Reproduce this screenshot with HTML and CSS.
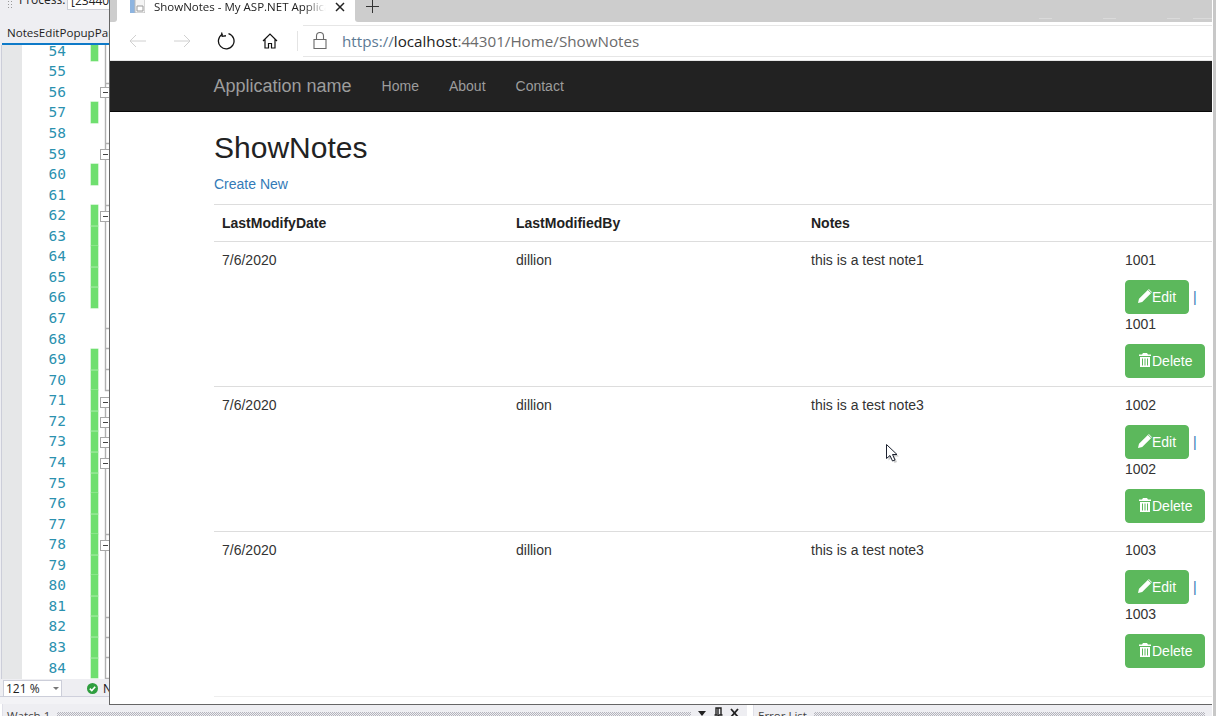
FILE: index.html
```html
<!DOCTYPE html>
<html lang="en">
<head>
<meta charset="utf-8">
<title>ShowNotes - My ASP.NET Application</title>
<link rel="stylesheet" href="styles.css">
</head>
<body>
<div class="ide">
  <div class="ide-toolbar">
    <span class="grip"></span>
    <span class="process-label">Process:</span>
    <span class="process-box">[23440]</span>
  </div>
  <div class="ide-tabs"><span class="ide-tab">NotesEditPopupPartial</span></div>
  <div class="editor">
    <div class="lines">
      <div class="line"><span class="num">54</span><span class="mark on"></span></div>
      <div class="line"><span class="num">55</span><span class="mark"></span></div>
      <div class="line"><span class="num">56</span><span class="mark"></span></div>
      <div class="line"><span class="num">57</span><span class="mark on"></span></div>
      <div class="line"><span class="num">58</span><span class="mark"></span></div>
      <div class="line"><span class="num">59</span><span class="mark"></span></div>
      <div class="line"><span class="num">60</span><span class="mark on"></span></div>
      <div class="line"><span class="num">61</span><span class="mark"></span></div>
      <div class="line"><span class="num">62</span><span class="mark on"></span></div>
      <div class="line"><span class="num">63</span><span class="mark on seam"></span></div>
      <div class="line"><span class="num">64</span><span class="mark on"></span></div>
      <div class="line"><span class="num">65</span><span class="mark on seam"></span></div>
      <div class="line"><span class="num">66</span><span class="mark on seam"></span></div>
      <div class="line"><span class="num">67</span><span class="mark"></span></div>
      <div class="line"><span class="num">68</span><span class="mark"></span></div>
      <div class="line"><span class="num">69</span><span class="mark on"></span></div>
      <div class="line"><span class="num">70</span><span class="mark on seam"></span></div>
      <div class="line"><span class="num">71</span><span class="mark on"></span></div>
      <div class="line"><span class="num">72</span><span class="mark on seam"></span></div>
      <div class="line"><span class="num">73</span><span class="mark on seam"></span></div>
      <div class="line"><span class="num">74</span><span class="mark on seam"></span></div>
      <div class="line"><span class="num">75</span><span class="mark on seam"></span></div>
      <div class="line"><span class="num">76</span><span class="mark on"></span></div>
      <div class="line"><span class="num">77</span><span class="mark on seam"></span></div>
      <div class="line"><span class="num">78</span><span class="mark on"></span></div>
      <div class="line"><span class="num">79</span><span class="mark on seam"></span></div>
      <div class="line"><span class="num">80</span><span class="mark on"></span></div>
      <div class="line"><span class="num">81</span><span class="mark on seam"></span></div>
      <div class="line"><span class="num">82</span><span class="mark on seam"></span></div>
      <div class="line"><span class="num">83</span><span class="mark on seam"></span></div>
      <div class="line"><span class="num">84</span><span class="mark on seam"></span></div>
    </div>
    <svg class="folds" width="12" height="634" viewBox="98 45 12 634" aria-hidden="true">
      <g fill="none" stroke="#b0b0b0" stroke-width="1.4">
        <path d="M105.5 44V87M105.5 83.5H110"/>
        <path d="M105.5 98V149M105.5 143.5H110"/>
        <path d="M105.5 160V211M105.5 205.5H110"/>
        <path d="M105.5 222V390.5H110M105.500 328.5H110M105.5 348.5H110M105.5 369.5H110"/>
        <path d="M105.5 408V417M105.5 428V437M105.5 448V458"/>
        <path d="M105.5 469V540M105.5 534.5H110"/>
        <path d="M105.5 551V678.5H110M105.5 617.5H110M105.5 637.5H110M105.5 657.5H110"/>
      </g>
      <g class="fold-box">
        <rect x="100.5" y="87.5" width="10" height="10"/><path d="M103 92.5h5"/>
        <rect x="100.5" y="149.5" width="10" height="10"/><path d="M103 154.5h5"/>
        <rect x="100.5" y="211.5" width="10" height="10"/><path d="M103 216.5h5"/>
        <rect x="100.5" y="397.5" width="10" height="10"/><path d="M103 402.5h5"/>
        <rect x="100.5" y="417.5" width="10" height="10"/><path d="M103 422.5h5"/>
        <rect x="100.5" y="437.5" width="10" height="10"/><path d="M103 442.5h5"/>
        <rect x="100.5" y="458.5" width="10" height="10"/><path d="M103 463.5h5"/>
        <rect x="100.5" y="540.5" width="10" height="10"/><path d="M103 545.5h5"/>
      </g>
    </svg>
  </div>
  <div class="status">
    <span class="zoom-box">121 %<span class="zoom-caret"></span></span>
    <svg class="ok-icon" width="11" height="11" viewBox="0 0 11 11" aria-hidden="true"><circle cx="5.5" cy="5.5" r="5.5" fill="#2f9e3f"/><path d="M2.8 5.6l2 2 3.4-3.8" fill="none" stroke="#fff" stroke-width="1.6"/></svg>
    <span class="status-text">No issues found</span>
  </div>
  <div class="panels">
    <div class="panel panel-watch">
      <span class="panel-title">Watch 1</span>
      <span class="panel-dots"></span>
      <svg class="panel-tools" width="46" height="12" viewBox="0 0 46 12" aria-hidden="true">
        <path d="M0 4h8l-4 5z" fill="#222"/>
        <path d="M18 1h5v7h-5zM20 1v6M16.500 8h8M20.500 8v4" fill="none" stroke="#222" stroke-width="1.400"/>
        <path d="M33 2l7 8M40 2l-7 8" fill="none" stroke="#222" stroke-width="1.800"/>
      </svg>
    </div>
    <div class="panel panel-errors">
      <span class="panel-title">Error List</span>
      <span class="panel-dots"></span>
    </div>
  </div>
</div>

<div class="browser">
  <div class="tabstrip">
    <span class="strip-left"></span>
    <div class="tab">
      <svg class="favicon" width="15" height="14" viewBox="0 0 15 14" aria-hidden="true">
        <path d="M0 0h5v14H0z" fill="#8db4e0"/>
        <path d="M5 0h10v14H5z" fill="#f4f4f4" stroke="#b8b8b8"/>
        <path d="M7 7h6v5H7z" fill="#fff" stroke="#9a9a9a"/>
      </svg>
      <span class="tab-title">ShowNotes - My ASP.NET Application</span>
      <svg class="tab-close" width="10" height="10" viewBox="0 0 10 10" aria-hidden="true"><path d="M1 1l8 8M9 1l-8 8" stroke="#222" stroke-width="1.500" fill="none"/></svg>
    </div>
    <div class="strip-rest">
      <svg class="new-tab" width="13" height="13" viewBox="0 0 13 13" aria-hidden="true"><path d="M6.500 0v13M0 6.500h13" stroke="#333" stroke-width="1" fill="none"/></svg>
    </div>
  </div>
  <div class="addressbar">
    <span class="nav-btn"><svg width="18" height="14" viewBox="0 0 18 14" aria-hidden="true"><path d="M17 7H1M7 1L1 7l6 6" fill="none" stroke="#d0d0d0" stroke-width="1"/></svg></span>
    <span class="nav-btn"><svg width="18" height="14" viewBox="0 0 18 14" aria-hidden="true"><path d="M1 7h16M11 1l6 6-6 6" fill="none" stroke="#d0d0d0" stroke-width="1"/></svg></span>
    <span class="nav-btn"><svg width="18" height="18" viewBox="0 0 18 18" aria-hidden="true"><path d="M5.500 2.200A7.800 7.800 0 1 0 11.500 1.600" fill="none" stroke="#111" stroke-width="1.300"/><path d="M5 0.500v3.800h3.800" fill="none" stroke="#111" stroke-width="1.300" transform="rotate(-8 5 3)"/></svg></span>
    <span class="nav-btn"><svg width="16" height="16" viewBox="0 0 16 16" aria-hidden="true"><path d="M1 8l7-7 7 7M3 6.500V15h3.500v-4.500h3V15H13V6.500" fill="none" stroke="#111" stroke-width="1.200"/></svg></span>
    <span class="nav-divider"></span>
    <div class="url-field">
      <svg class="lock" width="14" height="17" viewBox="0 0 14 17" aria-hidden="true"><path d="M1 7.500h12v9H1zM3.500 7.500V4a3.500 3.500 0 0 1 7 0v3.500" fill="none" stroke="#6a6a6a" stroke-width="1.100"/></svg>
      <span class="url"><span class="url-soft">https://</span><span class="url-host">localhost</span><span class="url-dim">:44301/Home/ShowNotes</span></span>
    </div>
  </div>

  <nav class="navbar">
    <a class="brand" href="#">Application name</a>
    <a class="nav-link" href="#">Home</a>
    <a class="nav-link" href="#">About</a>
    <a class="nav-link" href="#">Contact</a>
  </nav>

  <main class="page">
    <h2 class="title">ShowNotes</h2>
    <p class="create"><a href="#">Create New</a></p>
    <table class="notes">
      <thead>
        <tr>
          <th class="col-date">LastModifyDate</th>
          <th class="col-by">LastModifiedBy</th>
          <th class="col-notes">Notes</th>
          <th></th>
        </tr>
      </thead>
      <tbody>
        <tr>
          <td>7/6/2020</td><td>dillion</td><td>this is a test note1</td>
          <td>
            <div class="id">1001</div>
            <div class="action"><a class="btn" href="#"><svg class="glyph" viewBox="0 0 14 14" aria-hidden="true"><path d="M0 14l1-4.200L9.800 1l3.200 3.200L4.200 13zM10.800 0l3.200 3.200-.6.600L10.200.6z"/></svg>Edit</a> <a class="sep" href="#">|</a></div>
            <div class="id">1001</div>
            <div class="action"><a class="btn" href="#"><svg class="glyph" viewBox="0 0 14 14" aria-hidden="true"><path d="M5 0h4l1 1.500h3V3H1V1.500h3zM2 4h10v10H2zM4 5.500V12.500h1V5.500zM6.500 5.500V12.500h1V5.500zM9 5.500V12.500h1V5.500z" fill-rule="evenodd"/></svg>Delete</a></div>
          </td>
        </tr>
        <tr>
          <td>7/6/2020</td><td>dillion</td><td>this is a test note3</td>
          <td>
            <div class="id">1002</div>
            <div class="action"><a class="btn" href="#"><svg class="glyph" viewBox="0 0 14 14" aria-hidden="true"><path d="M0 14l1-4.200L9.800 1l3.200 3.200L4.200 13zM10.800 0l3.200 3.200-.6.600L10.200.6z"/></svg>Edit</a> <a class="sep" href="#">|</a></div>
            <div class="id">1002</div>
            <div class="action"><a class="btn" href="#"><svg class="glyph" viewBox="0 0 14 14" aria-hidden="true"><path d="M5 0h4l1 1.500h3V3H1V1.500h3zM2 4h10v10H2zM4 5.500V12.500h1V5.500zM6.500 5.500V12.500h1V5.500zM9 5.500V12.500h1V5.500z" fill-rule="evenodd"/></svg>Delete</a></div>
          </td>
        </tr>
        <tr>
          <td>7/6/2020</td><td>dillion</td><td>this is a test note3</td>
          <td>
            <div class="id">1003</div>
            <div class="action"><a class="btn" href="#"><svg class="glyph" viewBox="0 0 14 14" aria-hidden="true"><path d="M0 14l1-4.200L9.800 1l3.200 3.200L4.200 13zM10.800 0l3.200 3.200-.6.600L10.200.6z"/></svg>Edit</a> <a class="sep" href="#">|</a></div>
            <div class="id">1003</div>
            <div class="action"><a class="btn" href="#"><svg class="glyph" viewBox="0 0 14 14" aria-hidden="true"><path d="M5 0h4l1 1.500h3V3H1V1.500h3zM2 4h10v10H2zM4 5.500V12.500h1V5.500zM6.500 5.500V12.500h1V5.500zM9 5.500V12.500h1V5.500z" fill-rule="evenodd"/></svg>Delete</a></div>
          </td>
        </tr>
      </tbody>
    </table>
    <hr class="rule">
  </main>
  <svg class="cursor" width="16" height="21" viewBox="0 0 16 21" aria-hidden="true">
    <path d="M2.500 2.500v14l3.500-3 2.500 5.500 2.500-1-2.500-5.500h4.500z" fill="#8a8a8a" opacity=".45"/>
    <path d="M.5.500v14l3.500-3 2.500 5.500 2.500-1-2.500-5.500h4.500z" fill="#fff" stroke="#1c2230" stroke-width="1"/>
  </svg>
</div>
</body>
</html>
```
FILE: styles.css
```css
* { box-sizing: border-box; }
html, body { margin: 0; height: 100%; }
body {
  position: relative;
  width: 1216px;
  height: 716px;
  overflow: hidden;
  background: #c8c8c8;
  font-family: "Liberation Sans", Arial, sans-serif;
}

/* IDE behind the browser */
.ide {
  width: 1213px;
  height: 716px;
  display: flex;
  flex-direction: column;
  background: #eeeef2;
  border-right: 1px solid #fff;
  overflow: hidden;
}
.ide-toolbar {
  height: 25px;
  flex: none;
  display: flex;
  align-items: flex-start;
  padding-left: 7px;
  font: 12px/16px "Open Sans", sans-serif;
  color: #222;
  overflow: hidden;
}
.grip {
  width: 5px;
  height: 9px;
  background: radial-gradient(circle, #999 0.6px, transparent 1px) 0 0 / 3px 3px;
}
.process-label { margin: -8px 0 0 7px; width: 48px; }
.process-box {
  margin-top: -8px;
  width: 50px;
  height: 18px;
  padding: 0 3px;
  background: #fff;
  border: 1px solid #ccced6;
  font-size: 12px;
  line-height: 16px;
}
.ide-tabs {
  height: 20px;
  flex: none;
  margin-left: 2px;
  width: 107px;
  border-bottom: 2px solid #0e7ac8;
  overflow: hidden;
  white-space: nowrap;
}
.ide-tab {
  display: block;
  padding-left: 5px;
  font: 11.600px/16px "Open Sans", sans-serif;
  color: #1e1e1e;
}
.editor {
  height: 634px;
  flex: none;
  display: flex;
  margin-left: 1px;
  background: #fff;
  overflow: hidden;
  border-left: 1px solid #ccced9;
}
.lines {
  flex: none;
  width: 96px;
  margin-top: -4.300px;
  background: linear-gradient(to right, #e6e7e8 20px, #fff 20px);
}
.line {
  height: 20.570px;
  display: flex;
}
.num {
  width: 64px;
  text-align: right;
  font: 14.500px/20.570px "DejaVu Sans Mono", monospace;
  color: #2b91af;
}
.mark {
  margin-left: 25px;
  width: 6.500px;
  height: 100%;
}
.mark.on { background: #6fdf6f; box-shadow: 0 0 0 .5px #a8eca8; }
.mark.seam { border-top: 1px solid #90e690; }
.folds { flex: none; }
.fold-box rect { fill: #fff; stroke: #a8a8a8; stroke-width: 1; }
.fold-box path { stroke: #444; stroke-width: 1; fill: none; }
.status {
  height: 25px;
  flex: none;
  display: flex;
  align-items: flex-start;
  padding: 1px 0 0 3px;
  background: linear-gradient(to bottom, #eeeef2 17px, #cfd0dc 17px, #cfd0dc 18px, #f3f3f6 18px);
}
.zoom-box {
  position: relative;
  width: 59px;
  height: 17px;
  padding-left: 2px;
  background: #fff;
  border: 1px solid #ccced9;
  font: 12px/15px "Open Sans", sans-serif;
  color: #1e1e1e;
}
.zoom-caret {
  position: absolute;
  right: 2px;
  top: 6px;
  border: 3px solid transparent;
  border-top: 3px solid #777;
}
.ok-icon { margin: 3px 0 0 25px; }
.status-text {
  margin-left: 5px;
  font: 12px/17px "Open Sans", sans-serif;
  white-space: nowrap;
  color: #111;
}
.panels {
  flex: 1;
  display: flex;
  gap: 6px;
  background: #fff;
  padding-left: 2px;
}
.panel {
  display: flex;
  align-items: flex-start;
  background: #eeeef2;
  overflow: hidden;
  padding-left: 4px;
  border-left: 1px solid #e0e0e8;
}
.panel-watch { width: 745px; }
.panel-errors { flex: 1; }
.panel-title {
  font: 11.500px/17px "Open Sans", sans-serif;
  color: #444;
  white-space: nowrap;
  margin-top: 3px;
}
.panel-dots {
  flex: 1;
  height: 5px;
  margin: 8px 7px 0 7px;
  background: repeating-conic-gradient(#b4b4bc 0 25%, transparent 0 50%) 0 0 / 2px 2px;
}
.panel-tools { margin: 3px 3px 0 0; flex: none; }

/* Browser window */
.browser {
  position: absolute;
  left: 109px;
  top: 0;
  width: 1103px;
  height: 705px;
  display: flex;
  flex-direction: column;
  background: #fff;
  border-left: 1px solid #666;
  border-bottom: 1px solid #666;
  overflow: hidden;
}
.tabstrip { height: 22px; flex: none; display: flex; background: #fff; }
.strip-left { width: 7px; background: #cdcdcd; border-bottom-right-radius: 3px; }
.tab {
  width: 236px;
  display: flex;
  align-items: flex-start;
  padding-left: 13px;
  background: #fff;
  overflow: hidden;
}
.favicon { margin-top: -1px; flex: none; }
.tab-title {
  margin-left: 9px;
  width: 172px;
  flex: none;
  overflow: hidden;
  white-space: nowrap;
  font: 11.500px/14px "Open Sans", sans-serif;
  color: #222;
  -webkit-mask-image: linear-gradient(to right, #000 150px, transparent 172px);
  mask-image: linear-gradient(to right, #000 150px, transparent 172px);
}
.tab-close { margin: 2px 0 0 9px; flex: none; }
.strip-rest {
  flex: 1;
  margin-left: 2px;
  padding: 0 0 0 11px;
  border-bottom-left-radius: 3px;
  background:
    linear-gradient(#dadada, #dadada) 684px 18px / 13px 1px no-repeat,
    linear-gradient(#dadada, #dadada) 748px 18px / 13px 1px no-repeat,
    linear-gradient(#dadada, #dadada) 812px 18px / 13px 1px no-repeat,
    linear-gradient(#dadada, #dadada) 838px 18px / 19px 1px no-repeat,
    #cdcdcd;
}
.new-tab { display: block; margin-top: 0; }
.addressbar {
  height: 39px;
  flex: none;
  display: flex;
  align-items: center;
  padding-left: 6px;
  border-bottom: 1px solid #e6e6e6;
}
.nav-btn {
  width: 44px;
  height: 100%;
  flex: none;
  display: flex;
  align-items: center;
  justify-content: center;
}
.nav-divider { margin-left: 5px; width: 1px; height: 20px; background: #e4e4e4; flex: none; }
.url-field {
  margin-left: 5px;
  flex: 1;
  height: 32px;
  margin-top: -1px;
  display: flex;
  align-items: center;
  padding-left: 10px;
  border-top: 1px solid #e6e6e6;
  border-bottom: 1px solid #e6e6e6;
}
.lock { flex: none; margin-right: 15px; }
.url { font: 15.200px/20px "Open Sans", sans-serif; white-space: nowrap; }
.url-soft { color: #5d7a94; }
.url-host { color: #222; }
.url-dim { color: #6b6b6b; }

.navbar {
  height: 51px;
  flex: none;
  display: flex;
  padding-left: 103.500px;
  background: #222;
  border-bottom: 1px solid #080808;
}
.brand {
  padding: 15px;
  padding-left: 0;
  font-size: 18px;
  line-height: 20px;
  color: #9d9d9d;
  text-decoration: none;
}
.nav-link {
  padding: 15px;
  font-size: 14px;
  line-height: 20px;
  color: #9d9d9d;
  text-decoration: none;
}
.page {
  flex: 1;
  margin-left: 104px;
  font-size: 14px;
  line-height: 20px;
  color: #333;
  overflow: hidden;
}
.title {
  margin: 19px 0 10px;
  font-size: 30px;
  font-weight: 500;
  line-height: 33px;
  color: #222;
}
.create { margin: 0 0 10px; }
.create a, .sep { color: #337ab7; text-decoration: none; }
.notes {
  width: 998px;
  table-layout: fixed;
  border-collapse: collapse;
}
.col-date { width: 294px; }
.col-by { width: 295px; }
.col-notes { width: 314px; }
.notes th, .notes td {
  padding: 8px;
  text-align: left;
  vertical-align: top;
  border-top: 1px solid #ddd;
}
.notes th { font-weight: 700; border-bottom: 1px solid #ddd; color: #222; }
.id { margin-bottom: 10px; }
.action { height: 34px; white-space: nowrap; }
.btn {
  display: inline-flex;
  align-items: center;
  height: 34px;
  padding: 0 12px;
  border-radius: 4px;
  background: #5cb85c;
  border: 1px solid #5cb85c;
  color: #fff;
  text-decoration: none;
  vertical-align: top;
}
.glyph { width: 14px; height: 14px; fill: #fff; flex: none; margin-top: -2px; }
.sep { line-height: 34px; }
.rule {
  margin: 20px 0 0;
  border: 0;
  border-top: 1px solid #eee;
}
.cursor { position: absolute; left: 776px; top: 444px; }
```
